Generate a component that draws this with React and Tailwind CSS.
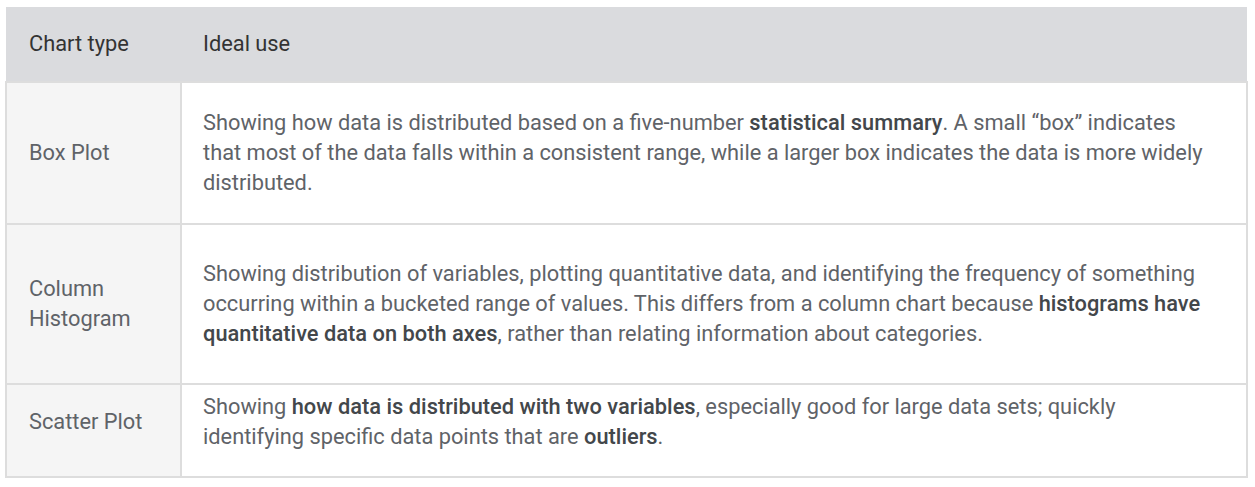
export default function App() {
  const B = ({ children }) => <span className="font-['Roboto_Medium','Roboto',sans-serif] font-medium text-[#43474b]">{children}</span>;
  const rows = [
    {
      type: "Box Plot",
      use: (
        <>
          Showing how data is distributed based on a five-number <B>statistical summary</B>. A small “box” indicates that most of the data falls within a consistent range, while a larger box indicates the data is more widely distributed.
        </>
      ),
      h: "h-[142px]",
    },
    {
      type: (
        <>
          Column
          <br />
          Histogram
        </>
      ),
      use: (
        <>
          Showing distribution of variables, plotting quantitative data, and identifying the frequency of something occurring within a bucketed range of values. This differs from a column chart because <B>histograms have quantitative data on both axes</B>, rather than relating information about categories.
        </>
      ),
      h: "h-[160px]",
    },
    {
      type: "Scatter Plot",
      use: (
        <>
          Showing <B>how data is distributed with two variables</B>, especially good for large data sets; quickly identifying specific data points that are <B>outliers</B>.
        </>
      ),
      h: "h-[93px] pb-[18px]",
    },
  ];
  return (
    <div className="bg-white w-[1255px] h-[487px] pt-[7px] pl-[5px] font-['Roboto',sans-serif]">
      <table className="w-[1243px] border-collapse">
        <thead>
          <tr className="bg-[#dadbde]">
            <th className="h-[75px] w-[175px] text-left font-normal text-[21.8px] leading-[30px] text-[#333] pl-[23px]">Chart type</th>
            <th className="h-[75px] text-left font-normal text-[21.8px] leading-[30px] text-[#333] pl-[22px]">Ideal use</th>
          </tr>
        </thead>
        <tbody>
          {rows.map((r, i) => (
            <tr key={i}>
              <td className={`${r.h} border-2 border-[#dddddd] bg-[#f5f5f5] text-[21.8px] leading-[30px] text-[#5f6368] pl-[22px] align-middle`}>{r.type}</td>
              <td className={`${r.h} border-2 border-[#dddddd] text-[21.8px] leading-[30px] text-[#5f6368] pl-[21px] pr-[36px] align-middle`}>{r.use}</td>
            </tr>
          ))}
        </tbody>
      </table>
    </div>
  );
}
